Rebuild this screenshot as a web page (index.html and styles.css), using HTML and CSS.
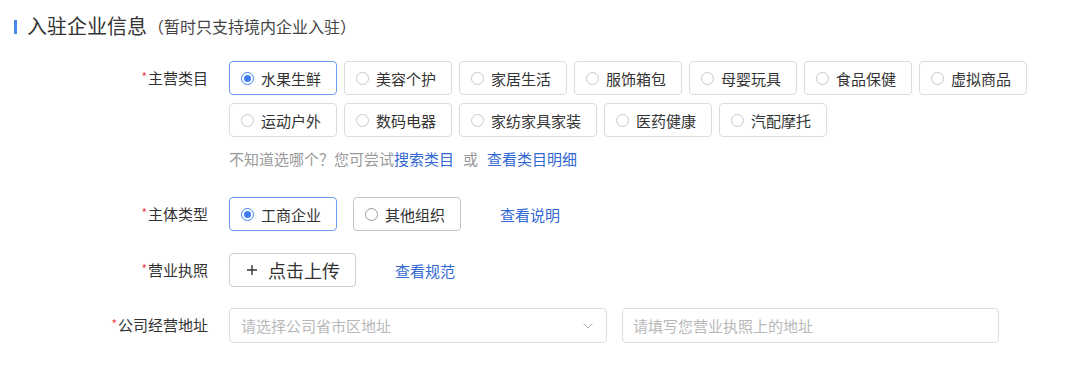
FILE: index.html
```html
<!DOCTYPE html>
<html lang="zh-CN">
<head>
<meta charset="utf-8">
<title>入驻企业信息</title>
<link rel="stylesheet" href="styles.css">
</head>
<body>
<div class="page">
  <div class="section-title">
    <span class="bar"></span>
    <span class="title-main">入驻企业信息</span>
    <span class="title-sub">（暂时只支持境内企业入驻）</span>
  </div>

  <div class="form">
    <div class="row row-cat">
      <div class="label"><span class="req">*</span>主营类目</div>
      <div class="field">
        <div class="chips">
          <div class="chip checked"><span class="radio"></span>水果生鲜</div>
          <div class="chip"><span class="radio"></span>美容个护</div>
          <div class="chip"><span class="radio"></span>家居生活</div>
          <div class="chip"><span class="radio"></span>服饰箱包</div>
          <div class="chip"><span class="radio"></span>母婴玩具</div>
          <div class="chip"><span class="radio"></span>食品保健</div>
          <div class="chip"><span class="radio"></span>虚拟商品</div>
          <div class="chip"><span class="radio"></span>运动户外</div>
          <div class="chip"><span class="radio"></span>数码电器</div>
          <div class="chip"><span class="radio"></span>家纺家具家装</div>
          <div class="chip"><span class="radio"></span>医药健康</div>
          <div class="chip"><span class="radio"></span>汽配摩托</div>
        </div>
        <div class="hint">不知道选哪个？您可尝试<a class="link">搜索类目</a><span class="or">或</span><a class="link">查看类目明细</a></div>
      </div>
    </div>

    <div class="row row-type">
      <div class="label"><span class="req">*</span>主体类型</div>
      <div class="field inline">
        <div class="chip checked"><span class="radio"></span>工商企业</div>
        <div class="chip gap-16"><span class="radio dark"></span>其他组织</div>
        <a class="link side-link">查看说明</a>
      </div>
    </div>

    <div class="row row-license">
      <div class="label"><span class="req">*</span>营业执照</div>
      <div class="field inline">
        <div class="upload">
          <svg class="plus" width="10" height="10" viewBox="0 0 10 10"><path d="M5 0V10M0 5H10" stroke="#333" stroke-width="1.4" fill="none"/></svg>
          <span>点击上传</span>
        </div>
        <a class="link side-link">查看规范</a>
      </div>
    </div>

    <div class="row row-addr">
      <div class="label"><span class="req">*</span>公司经营地址</div>
      <div class="field inline">
        <div class="select">
          <span class="placeholder">请选择公司省市区地址</span>
          <svg class="chev" width="10" height="6" viewBox="0 0 10 6"><path d="M0.5 0.5L5 5L9.5 0.5" stroke="#b5b5b5" stroke-width="1" fill="none"/></svg>
        </div>
        <div class="input"><span class="placeholder">请填写您营业执照上的地址</span></div>
      </div>
    </div>
  </div>
</div>
</body>
</html>
```

FILE: styles.css
```css
* { box-sizing: border-box; }
html, body {
  margin: 0;
  padding: 0;
  background: #fff;
}
body {
  font-family: "Noto Sans CJK SC", "Noto Sans", "Liberation Sans", sans-serif;
  color: #333;
  font-size: 15px;
}
.page {
  width: 1080px;
  height: 374px;
  overflow: hidden;
}
.section-title {
  display: flex;
  align-items: center;
  height: 30px;
  margin-top: 10px;
  padding-left: 14px;
}
.bar {
  width: 3px;
  height: 14px;
  background: #4a86f0;
  margin-right: 10px;
  margin-top: 3px;
}
.title-main {
  font-size: 20px;
  color: #333;
}
.title-sub {
  font-size: 16px;
  color: #444;
  margin-left: 1px;
  margin-top: 2px;
}
.form {
  display: flex;
  flex-direction: column;
}
.row {
  display: grid;
  grid-template-columns: 208px 1fr;
  column-gap: 21px;
  align-items: start;
}
.row-cat { margin-top: 21px; }
.row-type { margin-top: 26px; }
.row-license { margin-top: 22px; }
.row-addr { margin-top: 21px; }
.label {
  text-align: right;
  height: 34px;
  line-height: 34px;
  color: #333;
  white-space: nowrap;
}
.req {
  color: #f0454f;
  font-size: 12px;
  margin-right: 1px;
  vertical-align: top;
  position: relative;
  top: -1px;
}
.field { min-width: 0; }
.field.inline {
  display: flex;
  align-items: center;
}
.chips {
  display: flex;
  flex-wrap: wrap;
  gap: 8px 7px;
  width: 820px;
}
.chip {
  display: flex;
  align-items: center;
  height: 34px;
  padding: 0 15px 0 11px;
  border: 1px solid #dcdcdc;
  border-radius: 4px;
  color: #333;
  white-space: nowrap;
  background: #fff;
}
.chip.checked {
  border-color: #6a9cf3;
}
.chip.gap-16 { margin-left: 16px; border-color: #c4c4c4; }
.radio {
  width: 13px;
  height: 13px;
  border: 1.3px solid #c9c9c9;
  border-radius: 50%;
  margin-right: 7px;
  flex: none;
  position: relative;
}
.radio.dark { border-color: #9a9a9a; }
.chip.checked .radio {
  border-color: #3d7ef6;
}
.chip.checked .radio::after {
  content: "";
  position: absolute;
  left: 2px;
  top: 2px;
  width: 7px;
  height: 7px;
  border-radius: 50%;
  background: #3d7ef6;
}
.hint {
  margin-top: 10px;
  height: 24px;
  line-height: 24px;
  color: #9a9a9a;
  white-space: nowrap;
}
.link {
  color: #3168d3;
  cursor: pointer;
}
.or { margin: 0 9px; }
.side-link { margin-left: 39px; }
.upload {
  display: flex;
  align-items: center;
  height: 34px;
  padding: 0 15px 0 17px;
  border: 1px solid #cfcfcf;
  border-radius: 4px;
  font-size: 18px;
  color: #333;
}
.plus { margin-right: 11px; }
.select, .input {
  display: flex;
  align-items: center;
  height: 35px;
  border: 1px solid #dedede;
  border-radius: 4px;
  background: #fff;
}
.select {
  width: 378px;
  padding: 0 13px 0 11px;
  justify-content: space-between;
}
.input {
  width: 377px;
  margin-left: 15px;
  padding: 0 10px;
}
.placeholder {
  color: #b8b8b8;
  font-size: 15px;
}
```
